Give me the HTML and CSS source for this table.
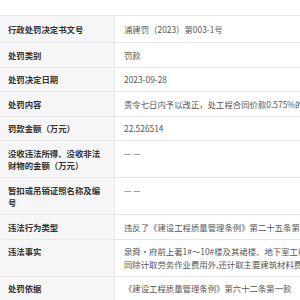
FILE: index.html
```html
<!DOCTYPE html>
<html lang="zh-CN">
<head>
<meta charset="utf-8">
<link rel="stylesheet" href="styles.css">
</head>
<body>
<div class="page">
  <div class="watermark wm1">信用中国</div>
  <div class="watermark wm2">信用中国</div>
  <div class="watermark wm3">信用中国</div>
  <div class="table">
    <div class="th first">行政处罚决定书文号</div>
    <div class="td first">浦建罚（2023）第003-1号</div>
    <div class="th">处罚类别</div>
    <div class="td">罚款</div>
    <div class="th">处罚决定日期</div>
    <div class="td">2023-09-28</div>
    <div class="th">处罚内容</div>
    <div class="td nowrap">责令七日内予以改正，处工程合同价款0.575%的罚款</div>
    <div class="th">罚款金额（万元）</div>
    <div class="td">22.526514</div>
    <div class="th">没收违法所得、没收非法财物的金额（万元）</div>
    <div class="td">— —</div>
    <div class="th">暂扣或吊销证照名称及编号</div>
    <div class="td">— —</div>
    <div class="th">违法行为类型</div>
    <div class="td nowrap">违反了《建设工程质量管理条例》第二十五条第三款</div>
    <div class="th">违法事实</div>
    <div class="td nowrap">泉舜·府前上著1#～10#楼及其裙楼、地下室工程施工过程中，<br>同除计取劳务作业费用外,还计取主要建筑材料费用</div>
    <div class="th">处罚依据</div>
    <div class="td nowrap">《建设工程质量管理条例》第六十二条第一款</div>
  </div>
</div>
</body>
</html>
```
FILE: styles.css
```css
html, body {
  margin: 0;
  padding: 0;
  background: #ffffff;
  overflow: hidden;
}
.page {
  position: relative;
  width: 300px;
  height: 300px;
  overflow: hidden;
  padding-top: 15px;
  box-sizing: border-box;
  font-family: "Noto Sans CJK SC", "Noto Sans", sans-serif;
  font-size: 8.4px;
  line-height: 12.5px;
}
.table {
  display: grid;
  grid-template-columns: 115px 485px;
  width: 600px;
  border-top: 1px solid #e6e6e6;
}
.th, .td {
  padding: 5.5px 8px;
  border-bottom: 1px solid #e6e6e6;
}
.th.first, .td.first {
  padding-top: 6.75px;
  padding-bottom: 6.75px;
}
.th {
  background: #f6f6f6;
  color: #333333;
  font-weight: bold;
  border-right: 1px solid #e6e6e6;
  padding-right: 10px;
}
.td {
  color: #555555;
  padding-left: 9px;
}
.nowrap {
  white-space: nowrap;
}
.watermark {
  position: absolute;
  font-size: 26px;
  font-weight: bold;
  color: rgba(0, 0, 0, 0.025);
  transform: rotate(-35deg);
  white-space: nowrap;
  pointer-events: none;
  z-index: 2;
}
.wm1 { left: 150px; top: 90px; }
.wm2 { left: 20px; top: 240px; }
.wm3 { left: 40px; top: 100px; }
```
